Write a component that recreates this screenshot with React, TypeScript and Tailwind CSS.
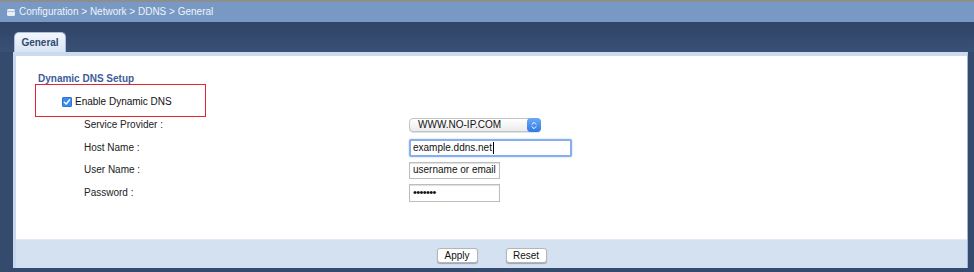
import React from 'react';

// Router admin page: Configuration > Network > DDNS > General
const rows = [
  { label: 'Service Provider :', h: 'h-[24px]' },
  { label: 'Host Name :', h: 'h-[22px]' },
  { label: 'User Name :', h: 'h-[22px]' },
  { label: 'Password :', h: 'h-[23px]' },
];

function Checkbox() {
  return (
    <span className="flex h-[10px] w-[10px] items-center justify-center rounded-[2px] bg-[#3b8cf0] shadow-[inset_0_0_0_1px_#2f74d0]">
      <svg width="8" height="8" viewBox="0 0 8 8">
        <path d="M1.3 4.2 L3.2 6 L6.7 1.8" fill="none" stroke="white" strokeWidth="1.4" strokeLinecap="round" strokeLinejoin="round" />
      </svg>
    </span>
  );
}

function SelectBox() {
  return (
    <div className="flex h-[14px] w-[132px] items-center justify-between rounded-[4px] border border-[#c4c4c4] bg-gradient-to-b from-white to-[#ececec] pl-[8px] shadow-[0_1px_0_#e2e2e2]">
      <span className="text-[10px] leading-none text-[#111]">WWW.NO-IP.COM</span>
      <span className="-mr-px flex h-[14px] w-[14px] items-center justify-center rounded-[4px] bg-gradient-to-b from-[#6aa9f7] to-[#2f7ae6]">
        <svg width="6" height="9" viewBox="0 0 6 9">
          <path d="M1 3.3 L3 1.3 L5 3.3 M1 5.7 L3 7.7 L5 5.7" fill="none" stroke="white" strokeWidth="1" strokeLinecap="round" strokeLinejoin="round" />
        </svg>
      </span>
    </div>
  );
}

function Field({ idx }: { idx: number }) {
  if (idx === 0) return <SelectBox />;
  if (idx === 1)
    return (
      <div className="flex h-[18px] w-[163px] items-center rounded-[2px] border-2 border-[#86b0ec] bg-white pl-[2px] shadow-[0_0_2px_#a9c6f2]">
        <span className="text-[10px] leading-none text-[#111]">example.ddns.net</span>
        <span className="ml-px h-[12px] w-px bg-black" />
      </div>
    );
  if (idx === 2)
    return (
      <div className="flex h-[17px] w-[91px] items-center overflow-hidden whitespace-nowrap border border-[#bdbdbd] bg-white pl-[3px] shadow-[inset_0_1px_1px_#e0e0e0]">
        <span className="text-[10px] leading-none text-[#111]">username or email</span>
      </div>
    );
  return (
    <div className="flex h-[18px] w-[91px] items-center border border-[#bdbdbd] bg-white pl-[3px] shadow-[inset_0_1px_1px_#e0e0e0]">
      <span className="text-[11px] leading-none tracking-[-0.6px] text-[#111]">•••••••</span>
    </div>
  );
}

function Button({ children }: { children: React.ReactNode }) {
  return (
    <button className="flex h-[15px] w-[41px] items-center justify-center rounded-[3px] border border-[#b5b5b5] bg-white text-[10px] leading-none text-[#111] shadow-[0_1px_1px_#9aa6b6]">
      {children}
    </button>
  );
}

export default function App() {
  return (
    <div
      className="flex h-[272px] w-[974px] flex-col bg-[#354b6e]"
      style={{ fontFamily: '"Liberation Sans", Arial, Helvetica, sans-serif' }}
    >
      {/* Breadcrumb bar */}
      <div className="flex h-[22px] items-center gap-[4px] border-t-2 border-[#8e8e8e] bg-[#7899c3] pl-[7px]">
        <svg width="8" height="7" viewBox="0 0 8 7">
          <rect x="0" y="0" width="8" height="7" rx="1.5" fill="#e9eef6" />
          <rect x="0" y="2" width="8" height="0.8" fill="#9fb3d0" />
        </svg>
        <span className="text-[10px] leading-none text-[#eef3fa]">Configuration &gt; Network &gt; DDNS &gt; General</span>
      </div>

      {/* Tabs */}
      <div className="flex h-[30px] items-end bg-gradient-to-b from-[#2f4466] to-[#3a5176] pl-[14px]">
        <div className="flex h-[20px] w-[52px] items-center justify-center rounded-t-[5px] border border-b-0 border-[#a7bedd] bg-gradient-to-b from-[#f4f7fc] to-[#d8e4f4]">
          <span className="text-[10px] font-bold leading-none text-[#2f4a70]">General</span>
        </div>
      </div>

      {/* Panel */}
      <div className="mb-[4px] ml-[13px] mr-[6px] flex flex-1 flex-col border-l-[3px] border-r border-t-[4px] border-l-[#c8d8ee] border-r-[#9fb6d8] border-t-[#cbdaef]">
        <div className="relative flex flex-1 flex-col bg-white pt-[16px]">
          <div className="h-[14px] pl-[22px] text-[10px] font-bold leading-[14px] text-[#3c5c9c]">Dynamic DNS Setup</div>

          <div className="mt-[5px] flex h-[22px] items-center gap-[3px] pl-[46px]">
            <Checkbox />
            <span className="text-[10px] leading-none text-[#111]">Enable Dynamic DNS</span>
          </div>

          {rows.map((r, i) => (
            <div key={r.label} className={`flex items-center ${r.h}`}>
              <span className="w-[393px] pl-[68px] text-[10px] leading-none text-[#222]">{r.label}</span>
              <Field idx={i} />
            </div>
          ))}

          {/* annotation box */}
          <div className="absolute left-[19px] top-[28px] h-[33px] w-[171px] border-[1.5px] border-[#e5262b]" />
        </div>

        <div className="flex h-[29px] items-center justify-center gap-[28px] border-t border-[#e3ebf7] bg-[#d4e1f1] pt-[3px]">
          <Button>Apply</Button>
          <Button>Reset</Button>
        </div>
      </div>
    </div>
  );
}
